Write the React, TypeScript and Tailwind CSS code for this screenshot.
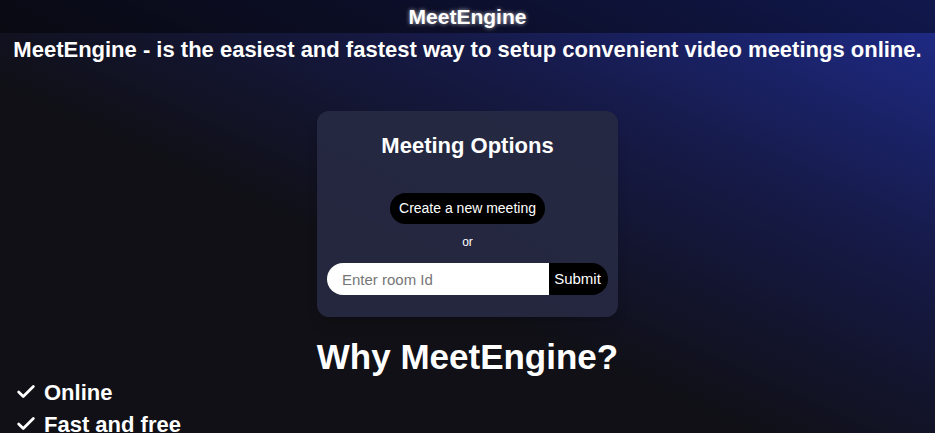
import { Check } from 'lucide-react';

export default function App() {
  return (
    <div className="h-[433px] w-full overflow-hidden bg-[linear-gradient(to_top_right,#101016_40%,#161a48_70%,#1f2c8c)] text-white font-['Liberation_Sans',Arial,sans-serif]">
      <header className="flex h-[33px] items-center justify-center bg-black/45">
        <h1 className="text-[21px] font-bold [text-shadow:0_0_4px_rgba(255,255,255,0.7)]">MeetEngine</h1>
      </header>

      <p className="mt-[4px] text-center text-[22px] font-bold leading-[26px] whitespace-nowrap">
        MeetEngine - is the easiest and fastest way to setup convenient video meetings online.
      </p>

      <div className="mx-auto mt-[48px] flex w-[301px] flex-col items-center rounded-[12px] bg-[#272a42]/90 px-[10px] pt-[21px] pb-[22px] shadow-lg">
        <h2 className="text-[22px] font-bold leading-[28px]">Meeting Options</h2>
        <button className="mt-[33px] h-[31px] rounded-full bg-black px-[9px] text-[14px]">
          Create a new meeting
        </button>
        <span className="mt-[11px] text-[12px] leading-[14px]">or</span>
        <form className="mt-[14px] flex h-[32px] w-full" onSubmit={e => e.preventDefault()}>
          <input
            className="h-full w-[222px] rounded-l-full bg-white px-[15px] text-[15px] text-black outline-none placeholder:text-[#767676]"
            placeholder="Enter room Id"
          />
          <button className="h-full flex-1 rounded-r-full bg-black pr-[2px] text-[15px]">Submit</button>
        </form>
      </div>

      <h2 className="mt-[20px] text-center text-[35px] font-bold leading-[40px]">Why MeetEngine?</h2>
      <ul className="ml-[15px] -mt-[1px] text-[22px] font-bold">
        <li className="flex h-[32px] items-center gap-[7px]">
          <Check className="h-[22px] w-[22px]" strokeWidth={3} />
          Online
        </li>
        <li className="flex h-[32px] items-center gap-[7px]">
          <Check className="h-[22px] w-[22px]" strokeWidth={3} />
          Fast and free
        </li>
      </ul>
    </div>
  );
}
